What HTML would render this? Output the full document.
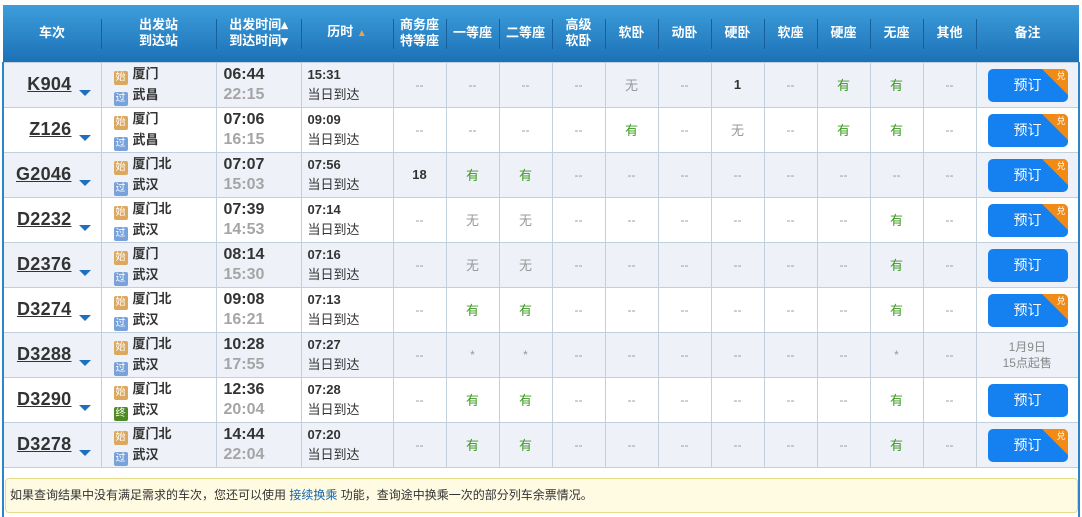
<!DOCTYPE html>
<html><head><meta charset="utf-8"><style>
*{margin:0;padding:0;box-sizing:border-box}
body{width:1082px;height:517px;background:#fff;font-family:"Liberation Sans","Noto Sans CJK SC",sans-serif;position:relative;overflow:hidden}
table{position:absolute;left:2px;top:5px;width:1076px;border-collapse:collapse;table-layout:fixed}
th{height:57px;background:linear-gradient(#3d9edb,#1c71b7);color:#fff;font-size:13px;font-weight:bold;line-height:16px;position:relative}
th:not(:first-child):before{content:"";position:absolute;left:0;top:14px;height:30px;border-left:1px solid #17609c}
td{height:45px;border:1px solid #c2cfdc;text-align:center;font-size:12px;color:#999;position:relative}
tr.o td{background:#eef1f8}
tr.e td{background:#fff}
td.tn{text-align:right;padding-right:29px;border-left:2px solid #2d85c8}
td.tn b{font-size:18px;color:#333;text-decoration:underline;letter-spacing:0.3px}
td.tn i{position:absolute;left:75px;top:27px;width:0;height:0;border-left:6px solid transparent;border-right:6px solid transparent;border-top:6px solid #1e6fc0}
td.st{text-align:left;padding-left:12px;color:#333;font-size:13px;font-weight:bold;line-height:20px}
.ic{display:inline-block;width:14px;height:14px;border-radius:2px;color:#fff;font-size:10px;line-height:14px;text-align:center;vertical-align:-2px;margin-right:5px;font-weight:normal}
.s{background:#dca75f}.p{background:#77a2dc}.z{background:#4f8a24}
td.tm{text-align:left;padding-left:7px;font-size:16px;font-weight:bold;line-height:20px;color:#333}
td.tm span{color:#a5a5a5}
td.du{text-align:left;padding-left:6px;font-size:13px;color:#333;line-height:20px}
td.lst{border-right:2px solid #2d85c8}
.y{color:#3a9a1e;font-size:13px}.n{color:#999;font-size:13px}.num{color:#333;font-weight:bold;font-size:13px}
.btn{position:absolute;left:11px;top:6px;width:80px;height:33px;background:#1581f0;border-radius:5px;color:#fff;font-size:14px;line-height:33px;overflow:hidden}
.btn em{position:absolute;right:0;top:0;width:0;height:0;border-top:26px solid #f28a16;border-left:26px solid transparent}
.btn u{position:absolute;right:2px;top:-9px;font-size:9px;color:#fff;text-decoration:none;font-style:normal}
.note{color:#888;font-size:12px;line-height:16px}
.foot{position:absolute;left:5px;top:478px;width:1073px;height:35px;background:#fffbe3;border:1px solid #e6db8c;border-radius:4px;font-size:12px;color:#333;line-height:33px;padding-left:4px}
.foot a{color:#1565b0;text-decoration:none}
.frame{position:absolute;left:2px;top:468px;width:2px;height:49px;background:#2d85c8}
.frame2{position:absolute;left:1078px;top:468px;width:2px;height:49px;background:#2d85c8}
</style></head><body>
<table>
<colgroup><col style="width:98px"><col style="width:115px"><col style="width:85px"><col style="width:92px">
<col style="width:53px"><col style="width:53px"><col style="width:53px"><col style="width:53px"><col style="width:53px"><col style="width:53px"><col style="width:53px"><col style="width:53px"><col style="width:53px"><col style="width:53px"><col style="width:53px"><col style="width:103px"></colgroup>
<tr><th>车次</th><th>出发站<br>到达站</th><th>出发时间▴<br>到达时间▾</th><th>历时 <span style="color:#f0a050;font-size:10px">▲</span></th><th>商务座<br>特等座</th><th>一等座</th><th>二等座</th><th>高级<br>软卧</th><th>软卧</th><th>动卧</th><th>硬卧</th><th>软座</th><th>硬座</th><th>无座</th><th>其他</th><th>备注</th></tr>

<tr class="o"><td class="tn"><b>K904</b><i></i></td><td class="st"><span class="ic s">始</span>厦门<br><span class="ic p">过</span>武昌</td><td class="tm">06:44<br><span>22:15</span></td><td class="du"><b>15:31</b><br>当日到达</td><td>--</td><td>--</td><td>--</td><td>--</td><td class="n">无</td><td>--</td><td class="num">1</td><td>--</td><td class="y">有</td><td class="y">有</td><td>--</td><td class="lst"><div class="btn">预订<em></em><u>兑</u></div></td></tr>

<tr class="e"><td class="tn"><b>Z126</b><i></i></td><td class="st"><span class="ic s">始</span>厦门<br><span class="ic p">过</span>武昌</td><td class="tm">07:06<br><span>16:15</span></td><td class="du"><b>09:09</b><br>当日到达</td><td>--</td><td>--</td><td>--</td><td>--</td><td class="y">有</td><td>--</td><td class="n">无</td><td>--</td><td class="y">有</td><td class="y">有</td><td>--</td><td class="lst"><div class="btn">预订<em></em><u>兑</u></div></td></tr>

<tr class="o"><td class="tn"><b>G2046</b><i></i></td><td class="st"><span class="ic s">始</span>厦门北<br><span class="ic p">过</span>武汉</td><td class="tm">07:07<br><span>15:03</span></td><td class="du"><b>07:56</b><br>当日到达</td><td class="num">18</td><td class="y">有</td><td class="y">有</td><td>--</td><td>--</td><td>--</td><td>--</td><td>--</td><td>--</td><td>--</td><td>--</td><td class="lst"><div class="btn">预订<em></em><u>兑</u></div></td></tr>

<tr class="e"><td class="tn"><b>D2232</b><i></i></td><td class="st"><span class="ic s">始</span>厦门北<br><span class="ic p">过</span>武汉</td><td class="tm">07:39<br><span>14:53</span></td><td class="du"><b>07:14</b><br>当日到达</td><td>--</td><td class="n">无</td><td class="n">无</td><td>--</td><td>--</td><td>--</td><td>--</td><td>--</td><td>--</td><td class="y">有</td><td>--</td><td class="lst"><div class="btn">预订<em></em><u>兑</u></div></td></tr>

<tr class="o"><td class="tn"><b>D2376</b><i></i></td><td class="st"><span class="ic s">始</span>厦门<br><span class="ic p">过</span>武汉</td><td class="tm">08:14<br><span>15:30</span></td><td class="du"><b>07:16</b><br>当日到达</td><td>--</td><td class="n">无</td><td class="n">无</td><td>--</td><td>--</td><td>--</td><td>--</td><td>--</td><td>--</td><td class="y">有</td><td>--</td><td class="lst"><div class="btn">预订</div></td></tr>

<tr class="e"><td class="tn"><b>D3274</b><i></i></td><td class="st"><span class="ic s">始</span>厦门北<br><span class="ic p">过</span>武汉</td><td class="tm">09:08<br><span>16:21</span></td><td class="du"><b>07:13</b><br>当日到达</td><td>--</td><td class="y">有</td><td class="y">有</td><td>--</td><td>--</td><td>--</td><td>--</td><td>--</td><td>--</td><td class="y">有</td><td>--</td><td class="lst"><div class="btn">预订<em></em><u>兑</u></div></td></tr>

<tr class="o"><td class="tn"><b>D3288</b><i></i></td><td class="st"><span class="ic s">始</span>厦门北<br><span class="ic p">过</span>武汉</td><td class="tm">10:28<br><span>17:55</span></td><td class="du"><b>07:27</b><br>当日到达</td><td>--</td><td>*</td><td>*</td><td>--</td><td>--</td><td>--</td><td>--</td><td>--</td><td>--</td><td>*</td><td>--</td><td class="lst note">1月9日<br>15点起售</td></tr>

<tr class="e"><td class="tn"><b>D3290</b><i></i></td><td class="st"><span class="ic s">始</span>厦门北<br><span class="ic z">终</span>武汉</td><td class="tm">12:36<br><span>20:04</span></td><td class="du"><b>07:28</b><br>当日到达</td><td>--</td><td class="y">有</td><td class="y">有</td><td>--</td><td>--</td><td>--</td><td>--</td><td>--</td><td>--</td><td class="y">有</td><td>--</td><td class="lst"><div class="btn">预订</div></td></tr>

<tr class="o"><td class="tn"><b>D3278</b><i></i></td><td class="st"><span class="ic s">始</span>厦门北<br><span class="ic p">过</span>武汉</td><td class="tm">14:44<br><span>22:04</span></td><td class="du"><b>07:20</b><br>当日到达</td><td>--</td><td class="y">有</td><td class="y">有</td><td>--</td><td>--</td><td>--</td><td>--</td><td>--</td><td>--</td><td class="y">有</td><td>--</td><td class="lst"><div class="btn">预订<em></em><u>兑</u></div></td></tr>
</table>
<div class="frame"></div><div class="frame2"></div>
<div class="foot">如果查询结果中没有满足需求的车次，您还可以使用 <a>接续换乘</a> 功能，查询途中换乘一次的部分列车余票情况。</div>
</body></html>
